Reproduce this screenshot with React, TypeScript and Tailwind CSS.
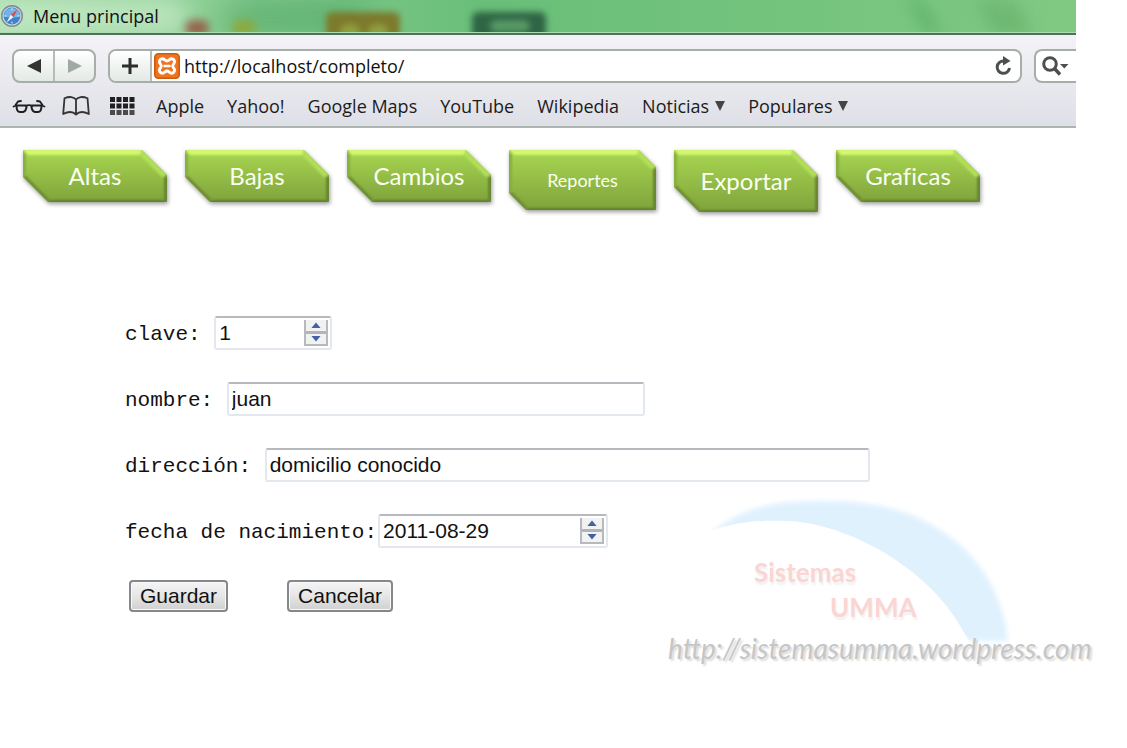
import { useState } from 'react'

interface NavItem {
  label: string
  width: number
  height: number
  /** Size of the two cut corners */
  cut: number
  className: string
}

const NAV_ITEMS: NavItem[] = [
  { label: 'Altas', width: 144, height: 52, cut: 25, className: 'text-2xl' },
  { label: 'Bajas', width: 144, height: 52, cut: 25, className: 'text-2xl' },
  { label: 'Cambios', width: 144, height: 52, cut: 25, className: 'text-2xl' },
  { label: 'Reportes', width: 147, height: 60, cut: 17, className: 'text-lg' },
  { label: 'Exportar', width: 144, height: 62, cut: 25, className: 'text-2xl' },
  { label: 'Graficas', width: 144, height: 52, cut: 25, className: 'text-2xl' },
]

const BOOKMARKS = [
  { label: 'Apple' },
  { label: 'Yahoo!' },
  { label: 'Google Maps' },
  { label: 'YouTube' },
  { label: 'Wikipedia' },
  { label: 'Noticias', menu: true },
  { label: 'Populares', menu: true },
]

function SafariIcon() {
  return (
    <svg viewBox="0 0 24 24" className="h-6 w-6" aria-hidden="true">
      <circle cx="12" cy="12" r="11" fill="#7f8a92" />
      <circle cx="12" cy="12" r="9.6" fill="#cfd7dc" />
      <circle cx="12" cy="12" r="8.4" fill="#3d83cb" />
      <path d="M4 12a8 8 0 0 1 16 0c-4 2-12 2-16 0z" fill="#75b1e8" />
      <path d="M12 4.5v2M12 17.5v2M4.5 12h2M17.5 12h2" stroke="#e6f2fb" strokeWidth="1" />
      <path d="M17.5 5.5 13.4 13.2 10.8 10.8z" fill="#d9503c" />
      <path d="M6.5 18.5 10.8 10.8 13.4 13.2z" fill="#f2f5f7" />
    </svg>
  )
}

function XamppIcon() {
  return (
    <svg viewBox="0 0 26 26" className="h-[26px] w-[26px]" aria-hidden="true">
      <rect x="0.8" y="0.8" width="24.4" height="24.4" rx="3.5" fill="#ef7420" stroke="#cd5c0d" strokeWidth="1.6" />
      <path
        d="M8.300 5.800c2.200 0 2.700 2.200 4.700 2.200s2.500-2.200 4.700-2.200a2.900 2.900 0 0 1 2.800 3.200c0 1.800-1.800 2.400-1.800 4s1.800 2.200 1.800 4a2.900 2.900 0 0 1-2.800 3.200c-2.200 0-2.700-2.200-4.700-2.200s-2.500 2.200-4.700 2.200a2.900 2.900 0 0 1-2.800-3.200c0-1.800 1.800-2.400 1.800-4s-1.800-2.200-1.800-4a2.900 2.900 0 0 1 2.800-3.200z"
        fill="#ef7420"
        stroke="#fff"
        strokeWidth="2.900"
      />
      <path d="M10.500 13h5" stroke="#fff" strokeWidth="2.600" strokeLinecap="round" />
    </svg>
  )
}

function GlassesIcon() {
  return (
    <svg viewBox="0 0 34 16" className="h-4 w-[34px]" fill="none" stroke="#1f1f1f" strokeWidth="2" strokeLinecap="round" strokeLinejoin="round" aria-hidden="true">
      <path d="M4.500 7.500H14c1 0 .5 6-3 6.500H8C5 14 4.500 10 4.500 7.500zM20 7.500h9.500c0 2.500-.5 6.500-3.500 6.500h-3c-3.500-.5-4-6.500-3-6.500z" />
      <path d="M14 8c1.500-1 4.500-1 6 0M1.500 8.500l3-1M32.500 8.500l-3-1M3.500 7 6 3.500l3-.5M30.500 7 28 3.500l-3-.5" strokeWidth="1.800" />
    </svg>
  )
}

function BookIcon() {
  return (
    <svg viewBox="0 0 28 20" className="h-5 w-7" fill="none" stroke="#333" strokeWidth="1.800" strokeLinejoin="round" aria-hidden="true">
      <path d="M14 3.500C12 .5 7 .3 2.500 2.300L1.200 18C6 15.500 11 15.500 14 18.500 17 15.500 22 15.500 26.800 18L25.500 2.300C21 .3 16 .5 14 3.500zM14 3.500v15" />
    </svg>
  )
}

function GridIcon() {
  return (
    <svg viewBox="0 0 25 18" className="h-[18px] w-[25px]" aria-hidden="true">
      {[0, 1, 2].map((row) =>
        [0, 1, 2, 3].map((col) => (
          <rect key={`${row}-${col}`} x={col * 6.5} y={row * 6.5} width="5" height="5" fill={row === 2 ? '#4b4b4b' : '#202020'} />
        ))
      )}
    </svg>
  )
}

function Triangle({ className, d }: { className: string; d: string }) {
  return (
    <svg viewBox="0 0 12 12" className={className} fill="currentColor" aria-hidden="true">
      <path d={d} />
    </svg>
  )
}

function TitleBar() {
  return (
    <header className="relative flex h-[35px] items-center overflow-hidden border-b-2 border-[#526f59] bg-linear-to-r from-[#a5dbaa] from-0% via-[#68be78] via-45% to-[#7fc983] pb-px font-['Open_Sans','Noto_Sans',sans-serif]">
      <div className="absolute inset-y-0 -left-5 w-52 rounded-full bg-[#c9ebca] opacity-80 blur-md" />
      <div className="absolute top-0 left-56 h-9 w-36 -skew-x-12 bg-[#58ad6c] opacity-80 blur-lg" />
      <div className="absolute top-5 left-[185px] h-4 w-6 rounded-full bg-[#96493a] opacity-80 blur-xs" />
      <div className="absolute top-5 left-[232px] h-4 w-6 rounded-full bg-[#93a531] opacity-80 blur-xs" />
      <div className="absolute top-3 left-[326px] h-7 w-[74px] rounded-md bg-[#7d7a2c] blur-[3px]" />
      <div className="absolute top-6 left-[340px] h-4 w-5 rounded-full bg-[#8f9f40] blur-[3px]" />
      <div className="absolute top-6 left-[368px] h-4 w-5 rounded-full bg-[#8f9f40] blur-[3px]" />
      <div className="absolute top-3 left-[472px] h-7 w-[74px] rounded-md bg-[#2f6545] blur-[3px]" />
      <div className="absolute top-5 left-[490px] h-3 w-10 rounded-full bg-[#579a65] blur-[3px]" />
      <div className="absolute top-0 left-[915px] h-9 w-5 skew-x-[24deg] bg-[#60b16d] opacity-70 blur-sm" />
      <div className="absolute top-0 left-[985px] h-9 w-10 skew-x-[24deg] bg-[#68b36d] opacity-70 blur-sm" />
      <div className="absolute inset-x-0 bottom-0 h-px bg-[#a9dfb0]" />
      <div className="relative flex items-center gap-[9px]">
        <SafariIcon />
        <h1 className="text-lg text-[#111]">Menu principal</h1>
      </div>
    </header>
  )
}

function Toolbar() {
  const [url, setUrl] = useState('http://localhost/completo/')

  return (
    <div className="flex h-[34px] overflow-hidden pl-3">
      <div className="flex w-[84px] shrink-0 rounded-lg border-2 border-[#a6aeaa] bg-linear-to-b from-white to-[#e3e9e5]">
        <button type="button" aria-label="Atrás" className="flex flex-1 items-center justify-center border-r-2 border-[#b5bcb8] text-[#333]">
          <Triangle className="h-[14px] w-[14px]" d="M12 0v12L0 6z" />
        </button>
        <button type="button" aria-label="Adelante" className="flex flex-1 items-center justify-center text-[#a1a9a5]">
          <Triangle className="h-[14px] w-[14px]" d="M0 0v12l12-6z" />
        </button>
      </div>
      <div className="ml-3 flex min-w-0 flex-1 items-stretch overflow-hidden rounded-lg border-2 border-[#a6aeaa] bg-white">
        <button type="button" aria-label="Nuevo marcador" className="flex w-[42px] shrink-0 items-center justify-center border-r-2 border-[#b5bcb8] bg-linear-to-b from-white to-[#e3e9e5]">
          <svg viewBox="0 0 16 16" className="h-4 w-4" stroke="#2d2d2d" strokeWidth="3" aria-hidden="true">
            <path d="M8 0v16M0 8h16" />
          </svg>
        </button>
        <div className="flex shrink-0 items-center pl-[2px]">
          <XamppIcon />
        </div>
        <input
          aria-label="Dirección web"
          value={url}
          onChange={(e) => setUrl(e.target.value)}
          className="min-w-0 flex-1 bg-transparent pl-1 text-lg text-[#111] outline-none"
        />
        <button type="button" aria-label="Recargar" className="px-2">
          <svg viewBox="0 0 18 20" className="h-5 w-[18px]" aria-hidden="true">
            <path d="M10 5a6.200 6.200 0 1 0 5.500 7" fill="none" stroke="#4c4f50" strokeWidth="3" />
            <path d="M9 0v9.500l7.500-4.500z" fill="#4c4f50" />
          </svg>
        </button>
      </div>
      <button type="button" aria-label="Buscar" className="ml-3 flex w-[42px] shrink-0 items-center rounded-l-lg border-2 border-r-0 border-[#a6aeaa] bg-white pl-1.5">
        <svg viewBox="0 0 28 20" className="h-5 w-7" aria-hidden="true">
          <circle cx="8" cy="8" r="6.300" fill="none" stroke="#4c4f50" strokeWidth="3" />
          <path d="m12.500 12.500 5.500 6" stroke="#4c4f50" strokeWidth="3.400" />
          <path d="M18 8h8.500l-4.200 4.500z" fill="#4c4f50" />
        </svg>
      </button>
    </div>
  )
}

function BookmarksBar() {
  return (
    <nav aria-label="Marcadores" className="flex flex-1 items-center pt-0.5 pl-3 text-lg text-[#1b1b1b]">
      <div className="mr-[21px] flex items-center gap-4">
        <button type="button" aria-label="Lista de lectura"><GlassesIcon /></button>
        <button type="button" aria-label="Marcadores"><BookIcon /></button>
        <button type="button" aria-label="Top Sites" className="ml-1"><GridIcon /></button>
      </div>
      <ul className="flex items-center gap-[23px] leading-6 whitespace-nowrap">
        {BOOKMARKS.map((item) => (
          <li key={item.label}>
            <a href="#" className="flex items-center gap-1.5">
              {item.label}
              {item.menu && <Triangle className="h-[10px] w-[10px] text-[#444]" d="M0 0h12L6 12z" />}
            </a>
          </li>
        ))}
      </ul>
    </nav>
  )
}

function NavButton({ label, width: w, height: h, cut: c, className }: NavItem) {
  const b = 5
  return (
    <a href="#" className="relative flex items-center justify-center text-[#fafff0]" style={{ width: w, height: h }}>
      <svg viewBox={`0 0 ${w} ${h}`} className="absolute inset-0 h-full w-full overflow-visible drop-shadow-[1px_2px_2px_rgba(0,0,0,0.4)]" aria-hidden="true">
        <defs>
          <linearGradient id={`fill-${label}`} x1="0" y1="0" x2="0" y2="1">
            <stop offset="0" stopColor="#a9d751" />
            <stop offset="1" stopColor="#7fa33c" />
          </linearGradient>
          <filter id={`bevel-${label}`}>
            <feGaussianBlur stdDeviation="0.8" />
          </filter>
          <clipPath id={`clip-${label}`}>
            <path d={`M0 0H${w - c}L${w} ${c}V${h}H${c}L0 ${h - c}z`} />
          </clipPath>
        </defs>
        <path d={`M0 0H${w - c}L${w} ${c}V${h}H${c}L0 ${h - c}z`} fill={`url(#fill-${label})`} />
        <g clipPath={`url(#clip-${label})`}>
          <g filter={`url(#bevel-${label})`}>
            <path d={`M0 -1H${w - c}L${w - c - 2} ${b}H${b}z`} fill="#d3f771" />
            <path d={`M${w - c} 0L${w} ${c}L${w - b} ${c + 2}L${w - c - 2} ${b}z`} fill="#b3df59" />
            <path d={`M-1 0L3 ${b}V${h - c - 2}L-1 ${h - c}z`} fill="#86ae40" />
            <path d={`M0 ${h - c}L3 ${h - c - 1}L${c + 1} ${h - 3}L${c} ${h}z`} fill="#6b8a33" />
            <path d={`M${c} ${h + 1}L${c + 2} ${h - 2}H${w - 3}L${w} ${h + 1}z`} fill="#5f7d2c" />
            <path d={`M${w + 1} ${c}V${h}L${w - 3} ${h - 2}V${c + 2}z`} fill="#678531" />
          </g>
        </g>
      </svg>
      <span className={`relative ${className}`}>{label}</span>
    </a>
  )
}

function Spinner({ onStep }: { onStep: (delta: number) => void }) {
  return (
    <div className="flex h-[26px] w-6 shrink-0 flex-col divide-y-3 divide-[#b1b5b8] border-2 border-t-0 border-[#b7babd] bg-[#f2f2f2] text-[#4362a3]">
      <button type="button" aria-label="Aumentar" onClick={() => onStep(1)} className="flex flex-1 items-center justify-center">
        <Triangle className="h-[5px] w-2 overflow-visible" d="M6-1 17 12H-5z" />
      </button>
      <button type="button" aria-label="Disminuir" onClick={() => onStep(-1)} className="flex flex-1 items-center justify-center">
        <Triangle className="h-[5px] w-2 overflow-visible" d="M-5 0H17L6 13z" />
      </button>
    </div>
  )
}

interface FieldProps {
  id: string
  label: string
  initial: string
  className: string
  onStep?: (value: string, delta: number) => string
}

function Field({ id, label, initial, className, onStep }: FieldProps) {
  const [value, setValue] = useState(initial)

  return (
    <div className="flex h-[34px] items-center gap-px">
      <label htmlFor={id} className="pt-1 font-['Liberation_Mono',monospace] text-[21px] whitespace-pre text-[#111]">
        {label}
      </label>
      <div className={`flex h-full items-center rounded-[3px] border-2 border-[#e3e7ee] border-t-[#b6b9be] bg-white pr-0.5 ${className}`}>
        <input
          id={id}
          value={value}
          onChange={(e) => setValue(e.target.value)}
          className="h-full w-full min-w-0 pl-[3px] text-[21px] outline-none"
        />
        {onStep && <Spinner onStep={(delta) => setValue(onStep(value, delta))} />}
      </div>
    </div>
  )
}

function stepNumber(value: string, delta: number) {
  return String(Number(value) + delta)
}

function stepDate(value: string, delta: number) {
  const date = new Date(value)
  if (isNaN(date.getTime())) return value
  date.setUTCDate(date.getUTCDate() + delta)
  return date.toISOString().slice(0, 10)
}

const FORM_BUTTON =
  'h-8 rounded-[4px] border-2 border-[#85888a] bg-linear-to-b from-[#f5f5f5] from-0% via-[#e6e6e6] via-50% to-[#d0d0d0] px-[9px] text-[21px] leading-7 text-[#111] inset-shadow-[0_0_0_1px_#fafafa]'

function RecordForm() {
  return (
    <form className="flex flex-col gap-8 pl-[125px] font-['Liberation_Sans',sans-serif] text-[#111]" onSubmit={(e) => e.preventDefault()}>
      <Field id="clave" label="clave: " initial="1" className="w-[118px]" onStep={stepNumber} />
      <Field id="nombre" label="nombre: " initial="juan" className="w-[418px]" />
      <Field id="direccion" label="dirección: " initial="domicilio conocido" className="w-[605px]" />
      <Field id="fecha" label="fecha de nacimiento:" initial="2011-08-29" className="w-[230px]" onStep={stepDate} />
      <div className="flex gap-[59px] pl-1">
        <button type="submit" className={FORM_BUTTON}>Guardar</button>
        <button type="reset" className={FORM_BUTTON}>Cancelar</button>
      </div>
    </form>
  )
}

function Watermark() {
  return (
    <div className="absolute right-7 bottom-0 w-[431px] font-['Lato',sans-serif] whitespace-nowrap">
      <svg viewBox="0 0 342 150" className="ml-6 h-[150px] w-[342px]" aria-hidden="true">
        <defs>
          <filter id="soft">
            <feGaussianBlur stdDeviation="2.500" />
          </filter>
        </defs>
        <path d="M16 42C55 8 90 7 135 7c60 0 100 15 133 44 25 22 44 55 48 96H276z" fill="#e0f1fe" filter="url(#soft)" />
        <path d="M-5 47C40 24 75 27 92 27c50 0 115 32 154 75 12 13 22 28 33 49H-5z" fill="#fff" />
      </svg>
      <p className="absolute top-[62px] left-[86px] text-[26px] leading-8 font-bold text-[#fbd5d3] text-shadow-[1px_3px_2px_rgba(0,0,0,0.06)]">Sistemas</p>
      <p className="absolute top-[97px] left-[162px] text-[26px] leading-8 font-bold text-[#fbd5d3] text-shadow-[1px_3px_2px_rgba(0,0,0,0.06)]">UMMA</p>
      <a href="http://sistemasumma.wordpress.com" className="relative -mt-4 block text-[28px] leading-10 text-[#c6c6c6] italic text-shadow-[2px_2px_2px_rgba(0,0,0,0.15)]">
        http://sistemasumma.wordpress.com
      </a>
    </div>
  )
}

export default function App() {
  return (
    <div className="min-h-screen bg-white">
      <div className="mr-[51px]">
        <TitleBar />
        <div className="flex h-[93px] flex-col border-b-2 border-[#adb5b1] bg-linear-to-b from-[#f3f3f7] to-[#dfdfe7] pt-3.5 font-['Open_Sans','Noto_Sans',sans-serif]">
          <Toolbar />
          <BookmarksBar />
        </div>
      </div>
      <main className="relative isolate pt-[22px] pb-[56px]">
        <nav aria-label="Menu principal" className="flex items-start gap-[18px] pl-[23px] font-['Lato',sans-serif] [font-variant-ligatures:none]">
          {NAV_ITEMS.map((item) => (
            <NavButton key={item.label} {...item} />
          ))}
        </nav>
        <div className="pt-[104px]">
          <RecordForm />
        </div>
        <Watermark />
      </main>
    </div>
  )
}
